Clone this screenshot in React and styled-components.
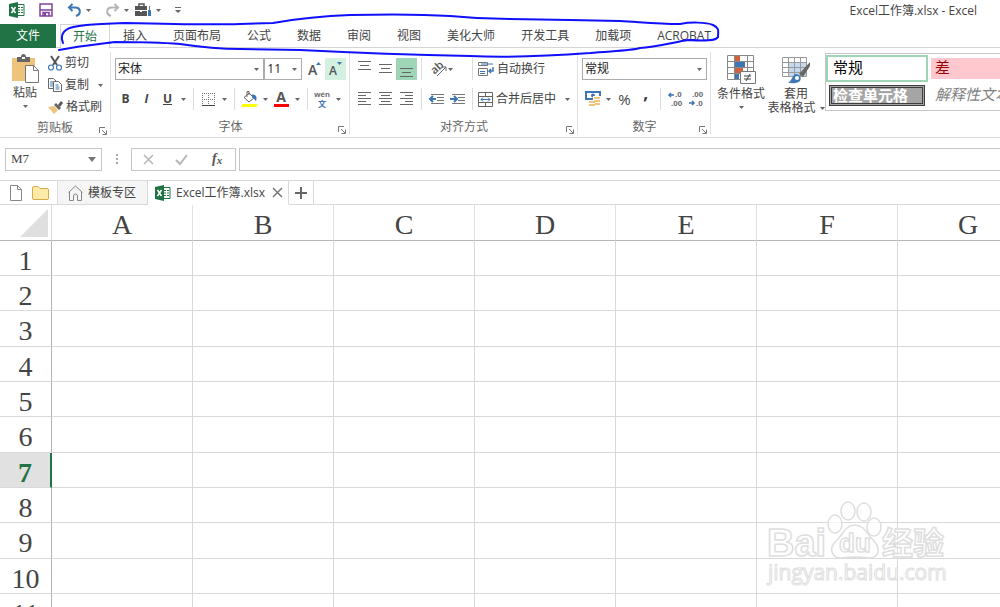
import styled, { createGlobalStyle, css } from 'styled-components';

const GlobalStyle = createGlobalStyle`
    * {
        box-sizing: border-box;
    }

    body {
        margin: 0;
        background: #fff;
        color: #444;
        font-family: 'Open Sans', 'Noto Sans CJK SC', sans-serif;
        font-size: 12px;
        line-height: 16px;
    }

    button, select, input {
        margin: 0;
        padding: 0;
        border: 0;
        border-radius: 0;
        background: none;
        color: inherit;
        font: inherit;
    }

    svg {
        display: block;
        flex: none;
        overflow: visible;
    }
`

const Page = styled.div`
    position: relative;
    display: flex;
    flex-direction: column;
    height: 100vh;
    overflow: hidden;
`

const TitleBar = styled.header`
    display: flex;
    align-items: center;
    justify-content: space-between;
    height: 24px;
    padding: 0 23px 4px 9px;
    flex: none;
`

const QuickAccess = styled.div`
    display: flex;
    align-items: center;
`

const QuickButton = styled.button`
    display: flex;
    align-items: center;
    justify-content: center;
    gap: 4px;
    height: 20px;
    margin-left: ${({ $gap }) => $gap || 14}px;
`

const Title = styled.h1`
    margin: 0;
    padding-top: 2px;
    font-size: 12px;
    font-weight: 400;
`

const Tabs = styled.nav`
    display: flex;
    height: 24px;
    flex: none;
    border-bottom: 1px solid #d5d5d5;
`

const FileTab = styled.button`
    width: 56px;
    height: 24px;
    margin-right: 4px;
    background: #217346;
    color: #fff;
`

const Tab = styled.button`
    height: 24px;
    padding: 0 13px;
    white-space: nowrap;

    ${({ $active }) => $active && css`
        border: 1px solid #d5d5d5;
        border-bottom: 0;
        padding: 0 12px;
        background: #fff;
        color: #217346;
    `}
`

const Ribbon = styled.section`
    display: flex;
    height: 90px;
    flex: none;
    border-bottom: 1px solid #d9d9d9;
    overflow: hidden;
`

const Group = styled.div`
    position: relative;
    display: flex;
    flex-direction: column;
    flex: none;
    width: ${({ $width }) => $width}px;
    padding: ${({ $pad }) => $pad || '10px 4px 0'};

    &::after {
        content: '';
        position: absolute;
        right: 0;
        top: 4px;
        bottom: 3px;
        width: 1px;
        background: #e1e1e1;
    }
`

const GroupFooter = styled.div`
    display: grid;
    grid-template-columns: 8px 1fr 8px;
    align-items: center;
    height: 20px;
    margin-top: auto;
    text-align: center;
    color: #666;

    span {
        grid-column: 2;
    }

    button {
        padding-top: 6px;
    }
`

const Row = styled.div`
    display: flex;
    align-items: center;
    height: 22px;
    margin-bottom: ${({ $gap }) => $gap || 0}px;
`

const ClipboardBody = styled.div`
    display: flex;
`

const ClipboardList = styled.div`
    display: flex;
    flex-direction: column;
`

const LabelButton = styled.button`
    display: flex;
    align-items: center;
    gap: 3px;
    height: 22px;
    padding-left: 1px;
    white-space: nowrap;

    span + svg {
        margin-left: 6px;
    }
`

const BigButton = styled.button`
    display: flex;
    flex-direction: column;
    align-items: center;
    width: ${({ $width }) => $width}px;
    padding-top: 2px;
    line-height: 14px;
    white-space: nowrap;

    svg:first-child {
        margin-bottom: 3px;
    }

    > svg:last-child {
        margin-top: 5px;
    }
`

const InlineArrow = styled.span`
    display: flex;
    align-items: center;
    gap: 4px;

    && svg {
        margin: 0;
    }
`

const Tool = styled.button`
    display: flex;
    align-items: center;
    justify-content: center;
    width: ${({ $width }) => $width || 21}px;
    height: 22px;
    background: ${({ $bg }) => $bg || 'none'};
    font-size: ${({ $size }) => $size || 12}px;
    font-weight: ${({ $bold }) => ($bold ? 700 : 400)};
    font-style: ${({ $italic }) => ($italic ? 'italic' : 'normal')};
    text-decoration: ${({ $underline }) => ($underline ? 'underline' : 'none')};
`

const DropTool = styled(Tool)`
    width: 11px;
`

const CommaTool = styled(Tool)`
    padding-top: 8px;
`

const Divider = styled.span`
    width: 1px;
    height: 22px;
    margin: 0 4px;
    background: #dcdcdc;
`

const SelectBox = styled.label`
    display: grid;
    align-items: center;
    width: ${({ $width }) => $width}px;
    height: 22px;
    border: 1px solid #ababab;
    margin-right: ${({ $gap }) => $gap || 0}px;
    color: #222;

    select, svg {
        grid-area: 1 / 1;
    }

    select {
        appearance: none;
        width: 100%;
        height: 20px;
        padding-left: 2px;
        outline: none;
    }

    svg {
        justify-self: end;
        margin-right: 4px;
        pointer-events: none;
    }
`

const StylesGroup = styled.div`
    display: flex;
    align-items: flex-start;
    flex: none;
    padding: 5px 0 0 4px;
`

const Gallery = styled.div`
    display: grid;
    grid-template-columns: repeat(3, 102px);
    grid-auto-rows: 27px;
    padding: 1px 0;
    border: 1px solid #c6c6c6;
`

const StyleCell = styled.button`
    display: flex;
    padding: 1px;
    border: 2px solid ${({ $selected }) => ($selected ? '#9fd5b7' : 'transparent')};
    text-align: left;

    span {
        flex: 1;
        height: 21px;
        padding-left: 4px;
        line-height: 18px;
        font-size: 15px;
        white-space: nowrap;
        color: ${({ $color }) => $color || '#000'};
        background: ${({ $bg }) => $bg || '#fff'};
        font-weight: ${({ $bold }) => ($bold ? 700 : 400)};
        font-style: ${({ $italic }) => ($italic ? 'italic' : 'normal')};
        ${({ $double }) => $double && css`
            border: 3px double #3f3f3f;
            padding-left: 1px;
            line-height: 14px;
        `}
    }
`

const FormulaBar = styled.div`
    display: flex;
    align-items: center;
    height: 43px;
    flex: none;
    padding-left: 5px;
    border-bottom: 1px solid #d9d9d9;
`

const NameBox = styled.label`
    display: flex;
    align-items: center;
    width: 97px;
    height: 23px;
    padding-right: 5px;
    border: 1px solid #c6c6c6;

    input {
        flex: 1;
        min-width: 0;
        padding-left: 5px;
        outline: none;
        font-family: 'Liberation Serif', serif;
        font-size: 13px;
    }
`

const Grip = styled.span`
    display: flex;
    justify-content: center;
    width: 29px;
`

const FormulaButtons = styled.div`
    display: flex;
    align-items: center;
    justify-content: space-around;
    width: 105px;
    height: 23px;
    margin-right: 3px;
    border: 1px solid #c6c6c6;
`

const FormulaInput = styled.input`
    flex: 1;
    height: 23px;
    outline: none;

    && {
        border: 1px solid #c6c6c6;
        border-right: 0;
    }
`

const BookTabs = styled.nav`
    display: flex;
    height: 24px;
    flex: none;

    &::after {
        content: '';
        flex: 1;
        border-bottom: 1px solid #d9d9d9;
    }
`

const BookActions = styled.div`
    display: flex;
    align-items: center;
    gap: 9px;
    width: 58px;
    padding-left: 9px;
    border-right: 1px solid #d9d9d9;
    border-bottom: 1px solid #d9d9d9;
`

const BookTab = styled.div`
    display: flex;
    align-items: center;
    gap: 5px;
    padding: 0 ${({ $active }) => ($active ? 5 : 11)}px 0 ${({ $active }) => ($active ? 7 : 10)}px;
    border-right: 1px solid #d9d9d9;
    border-bottom: 1px solid ${({ $active }) => ($active ? '#fff' : '#d9d9d9')};
    background: ${({ $active }) => ($active ? '#fff' : '#f5f5f5')};

    > button {
        display: flex;
        align-items: center;
        gap: 5px;
    }

    > button + button {
        padding-left: 2px;
    }
`

const AddTab = styled.button`
    display: flex;
    align-items: center;
    justify-content: center;
    width: 25px;

    && {
        border-right: 1px solid #d9d9d9;
        border-bottom: 1px solid #d9d9d9;
    }
`

const SheetArea = styled.main`
    flex: 1;
    min-height: 0;
    overflow: hidden;
`

const Sheet = styled.table`
    width: max-content;
    border-collapse: separate;
    border-spacing: 0;
    font-family: 'Liberation Serif', serif;
    font-size: 28px;
    line-height: 28px;

    tbody tr {
        height: 35px;
    }

    tbody tr:nth-child(3n) {
        height: 36px;
    }
`

const Cell = styled.td`
    padding: 0;
    border-right: 1px solid #d9d9d9;
    border-bottom: 1px solid #d9d9d9;
`

const ColHead = styled.th`
    width: 141px;
    min-width: 141px;
    height: 36px;
    padding: 5px 0 0;
    border-right: 1px solid #e1e1e1;
    border-bottom: 1px solid #b5b5b5;
    font-weight: 400;
`

const Corner = styled.td`
    width: 52px;
    min-width: 52px;
    padding: 0 3px 0 20px;
    border-right: 1px solid #d9d9d9;
    border-bottom: 1px solid #b5b5b5;
`

const RowHead = styled.th`
    padding: 5px 0 0;
    border-right: 1px solid #b5b5b5;
    border-bottom: 1px solid #d9d9d9;
    font-weight: 400;

    ${({ $active }) => $active && css`
        border-right: 2px solid #217346;
        background: #e1e1e1;
        color: #217346;
        font-weight: 700;
    `}
`

const InkLoop = styled.svg`
    position: absolute;
    left: 0;
    top: 0;
    pointer-events: none;
`

const Watermark = styled.svg`
    position: absolute;
    right: 50px;
    bottom: 17px;
    pointer-events: none;
`

const Caret = () => (
    <svg width="5" height="3" viewBox="0 0 5 3"><path d="M0 0h5L2.5 3z" fill="#666" /></svg>
)

const Drop = () => <DropTool aria-label="更多选项"><Caret /></DropTool>

const ExcelIcon = () => (
    <svg width="16" height="16" viewBox="0 0 16 16">
        <path d="M8 2.500h7v11H8z" fill="#fff" stroke="#217346" />
        <path d="M9 5.500h5M9 8h5M9 10.500h5" stroke="#217346" strokeDasharray="2 1" />
        <path d="M0 2l9-2v16l-9-2z" fill="#217346" />
        <path d="M2.500 5l4 6M6.500 5l-4 6" stroke="#fff" strokeWidth="1.500" />
    </svg>
)

const SaveIcon = () => (
    <svg width="14" height="14" viewBox="0 0 14 14" fill="none" stroke="#80439b" strokeWidth="1.500">
        <path d="M1 1h12v12H1z" />
        <path d="M1 7h12" />
        <path d="M4 13V9.500h6V13" />
        <path d="M5 10h2v3H5z" fill="#80439b" stroke="none" />
    </svg>
)

const UndoIcon = ({ color = '#3c76b4', flip }) => (
    <svg width="15" height="14" viewBox="0 0 15 14" fill="none" stroke={color} strokeWidth="2">
        <g transform={flip ? 'matrix(-1 0 0 1 15 0)' : undefined}>
            <path d="M5.500 1L2 4.500L5.500 8" />
            <path d="M2 4.500h6c6 0 6.500 6.500 1 8.500" />
        </g>
    </svg>
)

const ToolboxIcon = () => (
    <svg width="17" height="14" viewBox="0 0 17 14">
        <path d="M4 3V1h5v2" fill="none" stroke="#555" strokeWidth="1.500" />
        <path d="M0 3h12v4H0zM0 8h5v1h2V8h5v5H0z" fill="#555" />
        <path d="M14 3h1v4h-1z" fill="#777" />
        <path d="M13 7h3v6h-3z" fill="#3c76b4" />
    </svg>
)

const CustomizeIcon = () => (
    <svg width="6" height="6" viewBox="0 0 6 6"><path d="M0 0h6v1H0zM0 3h6L3 6z" fill="#666" /></svg>
)

const LauncherIcon = () => (
    <svg width="8" height="8" viewBox="0 0 8 8" fill="none" stroke="#777">
        <path d="M.5 6V.5H6M3 3l4 4M7.500 3.500v4h-4" />
    </svg>
)

const PasteIcon = () => (
    <svg width="28" height="29" viewBox="0 0 28 29">
        <path d="M1 4h23v23H1z" fill="#eec37b" />
        <path d="M6 3h4c0-4 5-4 5 0h4v5H6z" fill="#666" />
        <path d="M11 3h3v2h-3z" fill="#fff" />
        <path d="M14.500 11.500h8l5 5v12h-13z" fill="#fff" stroke="#777" />
        <path d="M22.500 11.500v5h5" fill="none" stroke="#777" />
    </svg>
)

const CutIcon = () => (
    <svg width="14" height="15" viewBox="0 0 14 15" fill="none">
        <path d="M3 0l6 9M11 0L5 9" stroke="#555" strokeWidth="2" />
        <circle cx="3" cy="11.500" r="2.500" stroke="#3c76b4" strokeWidth="1.200" />
        <circle cx="11" cy="11.500" r="2.500" stroke="#3c76b4" strokeWidth="1.200" />
    </svg>
)

const CopyIcon = () => (
    <svg width="14" height="14" viewBox="0 0 14 14" fill="#fff" stroke="#666">
        <path d="M.5.5h5l3 3v7h-8z" />
        <path d="M2 4h3M2 6h3M2 8h3" stroke="#3c76b4" />
        <path d="M5.500 3.500h5l3 3v7h-8z" />
        <path d="M7.500 7h3M7.500 9h4M7.500 11h4" stroke="#3c76b4" />
    </svg>
)

const BrushIcon = () => (
    <svg width="15" height="13" viewBox="0 0 15 13">
        <path d="M0 6l6-1 4 4-4 4z" fill="#eec37b" />
        <path d="M6 4l2-2 5 5-2 2z" fill="#666" />
        <path d="M10 4l3-4 2 2-3 4z" fill="#555" />
    </svg>
)

const GrowIcon = ({ down }) => (
    <svg width="13" height="16" viewBox="0 0 13 16">
        <text x="0" y="14" fontSize={down ? 12 : 14} fontWeight="600" fill="#555">A</text>
        <path d={down ? 'M8 1h5l-2.500 3z' : 'M8 4h5l-2.500-3z'} fill="#3c76b4" />
    </svg>
)

const BorderIcon = () => (
    <svg width="13" height="13" viewBox="0 0 13 13" fill="none" stroke="#777">
        <path d="M0 .5h13M0 6.500h13M.5 0v12M6.500 0v12M12.500 0v12" strokeDasharray="1 1" />
        <path d="M0 12.500h13" stroke="#444" />
    </svg>
)

const FillIcon = () => (
    <svg width="15" height="16" viewBox="0 0 15 16" fill="none">
        <path d="M2 6.500l5-4.500 5 5-5 4z" stroke="#666" fill="#fff" />
        <path d="M5 6V.5h2V4" stroke="#666" />
        <path d="M10 3.500c5 0 5 3 4 7-1-2-2-3-4-4z" fill="#3c76b4" />
        <path d="M0 13h15v3H0z" fill="#ff0" />
    </svg>
)

const FontColorIcon = () => (
    <svg width="15" height="16" viewBox="0 0 15 16">
        <text x="7" y="11" textAnchor="middle" fontSize="14" fontWeight="700" fill="#555">A</text>
        <path d="M0 13h15v3H0z" fill="red" />
    </svg>
)

const PhoneticIcon = () => (
    <svg width="17" height="18" viewBox="0 0 17 18" fontWeight="700">
        <text x="8" y="7" textAnchor="middle" fontFamily="Liberation Sans, sans-serif" fontSize="8" fill="#666">wén</text>
        <text x="8" y="17" textAnchor="middle" fontSize="8" fill="#3c76b4">文</text>
    </svg>
)

// each line is [start, end]; y is the first line's offset
const LinesIcon = ({ lines, y }) => (
    <svg width="13" height="18" viewBox="0 0 13 18" stroke="#666">
        {lines.map(([from, to], i) => (
            <path key={i} d={`M${from} ${y + i * (lines.length > 3 ? 3 : 4)}.5H${to}`} />
        ))}
    </svg>
)

const OrientationIcon = () => (
    <svg width="17" height="16" viewBox="0 0 17 16">
        <text x="1" y="11" fontSize="11" fontWeight="600" fill="#555" transform="rotate(-42 6 9)">ab</text>
        <path d="M6 15l9-9M11 6h4v4" fill="none" stroke="#666" />
    </svg>
)

const IndentIcon = ({ right }) => (
    <svg width="16" height="12" viewBox="0 0 16 12" fill="none">
        <path d="M2 1.500h13M8 4.500h7M8 7.500h7M2 10.500h13" stroke="#777" />
        <path d={right ? 'M0 6h6M4 3l3 3-3 3' : 'M7 6H1M4 3L1 6l3 3'} stroke="#3c76b4" strokeWidth="2" />
    </svg>
)

const WrapIcon = () => (
    <svg width="16" height="16" viewBox="0 0 16 16" fill="none">
        <path d="M.5 1.500h9v3h-9zM.5 7.500h9v7h-9z" stroke="#777" />
        <path d="M2 10.500h5M2 12.500h5M3 3h12" stroke="#3c76b4" />
        <path d="M15 6v4h-4M13 8l-2 2 2 2" stroke="#3c76b4" strokeWidth="1.500" />
    </svg>
)

const MergeIcon = () => (
    <svg width="15" height="15" viewBox="0 0 15 15" fill="none">
        <path d="M.5.5h14v14H.5zM.5 4.500h14M.5 10.500h14M7.500.5v4M7.500 10.500v4" stroke="#666" />
        <path d="M3 7.500h9M5 5.500l-2 2 2 2M10 5.500l2 2-2 2" stroke="#3c76b4" />
    </svg>
)

const CurrencyIcon = () => (
    <svg width="16" height="16" viewBox="0 0 16 16">
        <path d="M1 1h14v7H1z" fill="#fff" stroke="#3c76b4" strokeWidth="2" />
        <circle cx="8" cy="4.500" r="2" fill="#3c76b4" />
        <path d="M8 5h8v11H3V9h5z" fill="#fff" />
        <path d="M9 6h6v2H9zM9 9h6v2H9zM4 10h6v2H4zM4 13h6v2H4zM10 12h5v2h-5z" fill="#eec37b" />
    </svg>
)

const DecimalIcon = ({ less }) => (
    <svg width="16" height="16" viewBox="0 0 16 16" fontFamily="Liberation Sans, sans-serif" fontSize="8" fontWeight="700" fill="#666">
        <text x={less ? 3 : 7} y="6">{less ? '.00' : '.0'}</text>
        <text x={less ? 7 : 3} y="15">{less ? '.0' : '.00'}</text>
        <path d={less ? 'M0 12h5M3 10l2 2-2 2' : 'M6 4H1M3 2L1 4l2 2'} fill="none" stroke="#3c76b4" strokeWidth="1.500" />
    </svg>
)

const ConditionalIcon = () => (
    <svg width="29" height="29" viewBox="0 0 29 29">
        <path d="M.5.5h26v24H.5zM.5 6.500h26M.5 12.500h26M.5 18.500h26M7.500.5v24M20.500.5v24" fill="#fff" stroke="#888" />
        <path d="M8 1h5v5H8zM8 13h8v5H8z" fill="#d65f3c" />
        <path d="M8 7h10v5H8zM8 19h4v5H8z" fill="#3c76b4" />
        <path d="M13.500 16.500h15v12h-15z" fill="#fff" stroke="#777" />
        <path d="M17 21h7M17 24h7M23 19l-4 7" stroke="#444" />
    </svg>
)

const TableFormatIcon = () => (
    <svg width="29" height="29" viewBox="0 0 29 29">
        <path d="M.5 2.500h24v19H.5z" fill="#fff" />
        <path d="M7 7h18v14H7z" fill="#c3d9ee" />
        <path d="M.5 2.500h24v19H.5zM.5 7.500h24M.5 12.500h24M.5 17.500h24M6.500 2.500v19M12.500 2.500v19M18.500 2.500v19" fill="none" stroke="#999" />
        <path d="M28 7v4l-7 11-4-3z" fill="#666" />
        <path d="M14 19c4 0 6 4 4 7-3 3-8 2-12 2 4-2 4-8 8-9z" fill="#3c76b4" />
        <circle cx="15" cy="23" r="2" fill="#fff" />
    </svg>
)

const CancelIcon = ({ size = 11, color = '#b5b5b5' }) => (
    <svg width={size} height={size} viewBox="0 0 11 11" stroke={color} strokeWidth="1.500"><path d="M1 1l9 9M10 1l-9 9" /></svg>
)

const CheckIcon = () => (
    <svg width="13" height="11" viewBox="0 0 13 11" fill="none" stroke="#b5b5b5" strokeWidth="2"><path d="M1 6l4 4 7-9" /></svg>
)

const FxIcon = () => (
    <svg width="14" height="14" viewBox="0 0 14 14" fontFamily="Liberation Serif, serif" fontStyle="italic" fontWeight="700" fill="#555">
        <text x="2" y="11" fontSize="14">f<tspan fontSize="11" dy="1">x</tspan></text>
    </svg>
)

const PageIcon = () => (
    <svg width="14" height="16" viewBox="0 0 14 16" fill="none" stroke="#888"><path d="M1.500.5h7l4 4v11h-11zM8.500.5v4h4" /></svg>
)

const FolderIcon = () => (
    <svg width="17" height="14" viewBox="0 0 17 14"><path d="M.5 12V2q0-1.500 1.500-1.500h4L8 2.500h7q1.500 0 1.500 1.500v8q0 1.500-1.500 1.500H2Q.5 13.500.5 12z" fill="#fdeaa7" stroke="#d6ab4a" /></svg>
)

const HomeIcon = () => (
    <svg width="15" height="16" viewBox="0 0 15 16" fill="none" stroke="#888"><path d="M.5 7.500l7-6.500 7 6.500M1.500 7v8.500h4V11q0-2 2-2t2 2v4.500h4V7" /></svg>
)

const PlusIcon = () => (
    <svg width="12" height="12" viewBox="0 0 12 12" stroke="#666" strokeWidth="2"><path d="M0 6h12M6 0v12" /></svg>
)

const Footer = ({ name }) => (
    <GroupFooter>
        <span>{name}</span>
        <button aria-label={`${name}设置`}><LauncherIcon /></button>
    </GroupFooter>
)

const SelectField = ({ label, value, width, gap }) => (
    <SelectBox $width={width} $gap={gap}>
        <select aria-label={label} defaultValue={value}><option>{value}</option></select>
        <Caret />
    </SelectBox>
)

const LEFT = [[0, 13], [0, 8], [0, 13], [0, 8], [0, 13]]
const CENTER = [[0, 13], [2, 11], [0, 13], [2, 11], [0, 13]]
const RIGHT = [[0, 13], [5, 13], [0, 13], [5, 13], [0, 13]]

const tabs = ['开始', '插入', '页面布局', '公式', '数据', '审阅', '视图', '美化大师', '开发工具', '加载项', 'ACROBAT']
const columns = ['A', 'B', 'C', 'D', 'E', 'F', 'G']
const rows = Array.from({ length: 12 }, (_, i) => i + 1)
const activeRow = 7

function RibbonPanel() {
    return (
        <Ribbon>
            <Group $width={111} $pad="4px 4px 0 3px">
                <ClipboardBody>
                    <BigButton $width={44}>
                        <PasteIcon />
                        粘贴
                        <Caret />
                    </BigButton>
                    <ClipboardList>
                        <LabelButton><CutIcon />剪切</LabelButton>
                        <LabelButton><CopyIcon /><span>复制</span><Caret /></LabelButton>
                        <LabelButton><BrushIcon />格式刷</LabelButton>
                    </ClipboardList>
                </ClipboardBody>
                <Footer name="剪贴板" />
            </Group>

            <Group $width={239}>
                <Row $gap={8}>
                    <SelectField label="字体" value="宋体" width={150} />
                    <SelectField label="字号" value="11" width={38} gap={2} />
                    <Tool aria-label="增大字号"><GrowIcon /></Tool>
                    <Tool aria-label="减小字号" $bg="#d3f0e0"><GrowIcon down /></Tool>
                </Row>
                <Row>
                    <Tool $bold>B</Tool>
                    <Tool $bold $italic>I</Tool>
                    <Tool $bold $underline>U</Tool>
                    <Drop />
                    <Divider />
                    <Tool aria-label="边框"><BorderIcon /></Tool>
                    <Drop />
                    <Divider />
                    <Tool aria-label="填充颜色"><FillIcon /></Tool>
                    <Drop />
                    <Tool aria-label="字体颜色"><FontColorIcon /></Tool>
                    <Drop />
                    <Divider />
                    <Tool aria-label="拼音"><PhoneticIcon /></Tool>
                    <Drop />
                </Row>
                <Footer name="字体" />
            </Group>

            <Group $width={228}>
                <Row $gap={8}>
                    <Tool aria-label="顶端对齐"><LinesIcon lines={CENTER.slice(0, 3)} y={1} /></Tool>
                    <Tool aria-label="垂直居中"><LinesIcon lines={CENTER.slice(0, 3)} y={4} /></Tool>
                    <Tool aria-label="底端对齐" $bg="#9fd5b7"><LinesIcon lines={CENTER.slice(0, 3)} y={8} /></Tool>
                    <Divider />
                    <Tool aria-label="方向" $width={31}><OrientationIcon /><Caret /></Tool>
                    <DropTool as="span" />
                    <Divider />
                    <LabelButton><WrapIcon />自动换行</LabelButton>
                </Row>
                <Row>
                    <Tool aria-label="左对齐"><LinesIcon lines={LEFT} y={2} /></Tool>
                    <Tool aria-label="居中"><LinesIcon lines={CENTER} y={2} /></Tool>
                    <Tool aria-label="右对齐"><LinesIcon lines={RIGHT} y={2} /></Tool>
                    <Divider />
                    <Tool aria-label="减少缩进量"><IndentIcon /></Tool>
                    <Tool aria-label="增加缩进量"><IndentIcon right /></Tool>
                    <Divider />
                    <LabelButton><MergeIcon /><span>合并后居中</span><Caret /></LabelButton>
                </Row>
                <Footer name="对齐方式" />
            </Group>

            <Group $width={133}>
                <Row $gap={8}>
                    <SelectField label="数字格式" value="常规" width={125} />
                </Row>
                <Row>
                    <Tool aria-label="会计数字格式"><CurrencyIcon /></Tool>
                    <Drop />
                    <Tool $size={15}>%</Tool>
                    <CommaTool $bold $size={18}>’</CommaTool>
                    <Divider />
                    <Tool aria-label="增加小数位数"><DecimalIcon /></Tool>
                    <Tool aria-label="减少小数位数"><DecimalIcon less /></Tool>
                </Row>
                <Footer name="数字" />
            </Group>

            <StylesGroup>
                <BigButton $width={52}>
                    <ConditionalIcon />
                    条件格式
                    <Caret />
                </BigButton>
                <BigButton $width={58}>
                    <TableFormatIcon />
                    套用
                    <InlineArrow>表格格式<Caret /></InlineArrow>
                </BigButton>
                <Gallery>
                    <StyleCell $selected><span>常规</span></StyleCell>
                    <StyleCell $bg="#ffc7ce" $color="#9c0006"><span>差</span></StyleCell>
                    <StyleCell $bg="#c6efce" $color="#006100"><span>好</span></StyleCell>
                    <StyleCell $bg="#a5a5a5" $color="#fff" $bold $double><span>检查单元格</span></StyleCell>
                    <StyleCell $color="#7f7f7f" $italic><span>解释性文本</span></StyleCell>
                </Gallery>
            </StylesGroup>
        </Ribbon>
    )
}

function Grid() {
    return (
        <SheetArea>
            <Sheet>
                <thead>
                    <tr>
                        <Corner>
                            <svg width="28" height="28" viewBox="0 0 28 28"><path d="M28 0v28H0z" fill="#dfdfdf" /></svg>
                        </Corner>
                        {columns.map((name) => <ColHead key={name} scope="col">{name}</ColHead>)}
                    </tr>
                </thead>
                <tbody>
                    {rows.map((n) => (
                        <tr key={n}>
                            <RowHead scope="row" $active={n === activeRow}>{n}</RowHead>
                            {columns.map((name) => <Cell key={name} />)}
                        </tr>
                    ))}
                </tbody>
            </Sheet>
        </SheetArea>
    )
}

function App() {
    return (
        <Page>
            <GlobalStyle />
            <TitleBar>
                <QuickAccess>
                    <ExcelIcon />
                    <QuickButton aria-label="保存"><SaveIcon /></QuickButton>
                    <QuickButton aria-label="撤消"><UndoIcon /><Caret /></QuickButton>
                    <QuickButton aria-label="恢复"><UndoIcon flip color="#b5b5b5" /><Caret /></QuickButton>
                    <QuickButton aria-label="工具" $gap={6}><ToolboxIcon /><Caret /></QuickButton>
                    <QuickButton aria-label="自定义快速访问工具栏"><CustomizeIcon /></QuickButton>
                </QuickAccess>
                <Title>Excel工作簿.xlsx - Excel</Title>
            </TitleBar>

            <Tabs>
                <FileTab>文件</FileTab>
                {tabs.map((name, i) => <Tab key={name} $active={i === 0}>{name}</Tab>)}
            </Tabs>

            <RibbonPanel />

            <FormulaBar>
                <NameBox>
                    <input aria-label="名称框" defaultValue="M7" />
                    <svg width="8" height="5" viewBox="0 0 8 5"><path d="M0 0h8L4 5z" fill="#777" /></svg>
                </NameBox>
                <Grip>
                    <svg width="2" height="10" viewBox="0 0 2 10"><path d="M0 0h2v2H0zM0 4h2v2H0zM0 8h2v2H0z" fill="#aaa" /></svg>
                </Grip>
                <FormulaButtons>
                    <button aria-label="取消"><CancelIcon /></button>
                    <button aria-label="输入"><CheckIcon /></button>
                    <button aria-label="插入函数"><FxIcon /></button>
                </FormulaButtons>
                <FormulaInput aria-label="编辑栏" />
            </FormulaBar>

            <BookTabs>
                <BookActions>
                    <button aria-label="新建"><PageIcon /></button>
                    <button aria-label="打开"><FolderIcon /></button>
                </BookActions>
                <BookTab>
                    <button><HomeIcon />模板专区</button>
                </BookTab>
                <BookTab $active>
                    <button><ExcelIcon />Excel工作簿.xlsx</button>
                    <button aria-label="关闭"><CancelIcon color="#777" /></button>
                </BookTab>
                <AddTab aria-label="新建标签"><PlusIcon /></AddTab>
            </BookTabs>

            <Grid />

            <InkLoop width="730" height="64" viewBox="0 0 730 64" fill="none" stroke="#1010ff" strokeWidth="2" strokeLinecap="round" strokeLinejoin="round">
                <path d="M63 43C61 38 62 33 66 30C72 25 95 24 125 23C165 24 210 25 240 24L273 23C290 20 320 16 350 15C390 14 420 14 450 16C470 18 490 19 510 19L570 20L620 21C640 22 655 24 680 24C690 22 706 22 713 25C720 28 718 32 718 37C716 41 704 41 688 40C675 42 655 47 640 48C630 51 610 51 590 53C550 56 515 58 470 56C420 55 360 53 300 50L240 49C215 49 200 47 180 44C155 42 135 42 115 42C100 44 80 46 59 50" />
            </InkLoop>

            <Watermark width="186" height="94" viewBox="0 0 186 94" fill="#fff" fillOpacity="0.700" stroke="#dedede" strokeWidth="1.500">
                <ellipse cx="71" cy="28" rx="7" ry="9" />
                <ellipse cx="84" cy="15" rx="7" ry="9" />
                <ellipse cx="100" cy="16" rx="7" ry="9" />
                <ellipse cx="110" cy="31" rx="7" ry="9" />
                <path d="M91 29c-10 0-12 10-19 16-8 8-4 17 5 17 8-1 20-1 28 0 10 0 12-9 5-17-7-6-9-16-19-16z" />
                <g fontFamily="Liberation Sans, Noto Sans CJK SC, sans-serif" fontWeight="700">
                    <text x="3" y="60" fontSize="38">Bai</text>
                    <text x="75" y="56" fontSize="26">du</text>
                    <text x="118" y="58" fontSize="31">经验</text>
                </g>
                <text x="4" y="84" fontSize="21" strokeWidth="1">jingyan.baidu.com</text>
            </Watermark>
        </Page>
    )
}

export default App
